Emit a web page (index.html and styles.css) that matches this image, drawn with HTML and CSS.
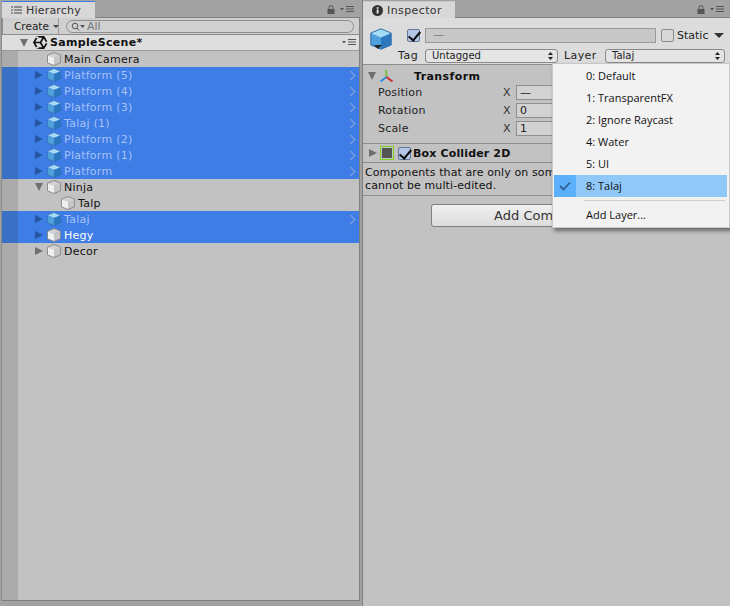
FILE: index.html
```html
<!DOCTYPE html>
<html lang="en">
<head>
    <meta charset="UTF-8">
    <title>Hierarchy and Inspector</title>
    <link rel="stylesheet" href="styles.css">
</head>
<body>
    <svg class="defs" width="0" height="0">
        <symbol id="cube-blue" viewBox="0 0 14 14">
            <path d="M7 .5 13.5 3.2 7 6 .5 3.2Z" fill="#a5dcf5"/>
            <path d="M.5 3.2 7 6V13.5L.5 10.8Z" fill="#4f9fdc"/>
            <path d="M13.5 3.2 7 6V13.5L13.5 10.8Z" fill="#2b78bd"/>
            <path d="M.5 3.2 7 .5 13.5 3.2V10.8L7 13.5.5 10.8Z" fill="none" stroke="#2d6aa6" stroke-width=".6"/>
        </symbol>
        <symbol id="cube-grey" viewBox="0 0 14 14">
            <path d="M7 .5 13.5 3.2 7 6 .5 3.2Z" fill="#d2d2d2"/>
            <path d="M.5 3.2 7 6V13.5L.5 10.8Z" fill="#f0f0f0"/>
            <path d="M13.5 3.2 7 6V13.5L13.5 10.8Z" fill="#c6c6c6"/>
            <path d="M.5 3.2 7 .5 13.5 3.2V10.8L7 13.5.5 10.8Z" fill="none" stroke="#858585" stroke-width=".9"/>
        </symbol>
        <symbol id="lock" viewBox="0 0 8 9">
            <path d="M2 4V2.5a2 2 0 0 1 4 0V4" fill="none" stroke="#555" stroke-width="1"/>
            <rect x="0.5" y="4" width="7" height="5" fill="#555"/>
        </symbol>
        <symbol id="menu" viewBox="0 0 14 7">
            <path d="M0 2h4L2 4.5Z" fill="#555"/>
            <path d="M6 .5h8M6 3h8M6 5.5h8" stroke="#555" stroke-width="1"/>
        </symbol>
        <symbol id="updown" viewBox="0 0 5 8">
            <path d="M2.500 0 5 3H0ZM0 5H5L2.500 8Z" fill="#222"/>
        </symbol>
    </svg>

    <div class="window">
        <section class="panel hierarchy">
            <div class="tabbar">
                <div class="tab tab-active">
                    <svg class="tab-icon" width="11" height="8" viewBox="0 0 11 8"><path d="M0 1h2M0 4h2M0 7h2M3 1h8M3 4h8M3 7h8" stroke="#444" stroke-width="1"/></svg>
                    Hierarchy
                </div>
                <div class="tab-tools">
                    <svg width="8" height="9"><use href="#lock"/></svg>
                    <svg width="14" height="7"><use href="#menu"/></svg>
                </div>
            </div>
            <div class="panel-body">
                <div class="toolbar">
                    <div class="create">Create <span class="create-caret"></span></div>
                    <div class="search">
                        <svg width="15" height="9" viewBox="0 0 15 9"><circle cx="4" cy="4" r="2.8" fill="none" stroke="#555"/><path d="M6 6l2 2.5" stroke="#555"/><path d="M9 3h5L11.500 6Z" fill="#555"/></svg>
                        <span>All</span>
                    </div>
                </div>
                <div class="scene-row">
                    <span class="arrow arrow-down"></span>
                    <svg class="unity" width="15" height="15" viewBox="0 0 16 16">
                        <path d="M1 8 4.500 2H11.500L15 8 11.500 14H4.500ZM8 8H1M8 8 11.500 2M8 8 11.500 14" fill="none" stroke="#111" stroke-width="1.800"/>
                        <path d="M3.200 1.500H6V3.200H3.200ZM3.200 12.800H6V14.500H3.200ZM14 7H16V9H14Z" fill="#dedede"/>
                    </svg>
                    <span class="scene-name">SampleScene*</span>
                    <svg class="scene-menu" width="14" height="7"><use href="#menu"/></svg>
                </div>
                <div class="tree">
                    <div class="row"><span class="gutter"></span><span class="arrow-slot"></span><svg class="cube" width="14" height="14"><use href="#cube-grey"/></svg><span>Main Camera</span></div>
                    <div class="row selected prefab"><span class="gutter"></span><span class="arrow-slot"><span class="arrow arrow-right"></span></span><svg class="cube" width="14" height="14"><use href="#cube-blue"/></svg><span>Platform (5)</span><span class="chevron"></span></div>
                    <div class="row selected prefab"><span class="gutter"></span><span class="arrow-slot"><span class="arrow arrow-right"></span></span><svg class="cube" width="14" height="14"><use href="#cube-blue"/></svg><span>Platform (4)</span><span class="chevron"></span></div>
                    <div class="row selected prefab"><span class="gutter"></span><span class="arrow-slot"><span class="arrow arrow-right"></span></span><svg class="cube" width="14" height="14"><use href="#cube-blue"/></svg><span>Platform (3)</span><span class="chevron"></span></div>
                    <div class="row selected prefab"><span class="gutter"></span><span class="arrow-slot"><span class="arrow arrow-right"></span></span><svg class="cube" width="14" height="14"><use href="#cube-blue"/></svg><span>Talaj (1)</span><span class="chevron"></span></div>
                    <div class="row selected prefab"><span class="gutter"></span><span class="arrow-slot"><span class="arrow arrow-right"></span></span><svg class="cube" width="14" height="14"><use href="#cube-blue"/></svg><span>Platform (2)</span><span class="chevron"></span></div>
                    <div class="row selected prefab"><span class="gutter"></span><span class="arrow-slot"><span class="arrow arrow-right"></span></span><svg class="cube" width="14" height="14"><use href="#cube-blue"/></svg><span>Platform (1)</span><span class="chevron"></span></div>
                    <div class="row selected prefab"><span class="gutter"></span><span class="arrow-slot"><span class="arrow arrow-right"></span></span><svg class="cube" width="14" height="14"><use href="#cube-blue"/></svg><span>Platform</span><span class="chevron"></span></div>
                    <div class="row"><span class="gutter"></span><span class="arrow-slot"><span class="arrow arrow-down"></span></span><svg class="cube" width="14" height="14"><use href="#cube-grey"/></svg><span>Ninja</span></div>
                    <div class="row child"><span class="gutter"></span><span class="arrow-slot"></span><svg class="cube" width="14" height="14"><use href="#cube-grey"/></svg><span>Talp</span></div>
                    <div class="row selected prefab"><span class="gutter"></span><span class="arrow-slot"><span class="arrow arrow-right"></span></span><svg class="cube" width="14" height="14"><use href="#cube-blue"/></svg><span>Talaj</span><span class="chevron"></span></div>
                    <div class="row selected"><span class="gutter"></span><span class="arrow-slot"><span class="arrow arrow-right"></span></span><svg class="cube" width="14" height="14"><use href="#cube-grey"/></svg><span>Hegy</span></div>
                    <div class="row"><span class="gutter"></span><span class="arrow-slot"><span class="arrow arrow-right"></span></span><svg class="cube" width="14" height="14"><use href="#cube-grey"/></svg><span>Decor</span></div>
                    <div class="tree-rest"><span class="gutter"></span></div>
                </div>
            </div>
        </section>

        <section class="panel inspector">
            <div class="tabbar">
                <div class="tab tab-inspector">
                    <svg class="tab-icon" width="11" height="11" viewBox="0 0 11 11"><circle cx="5.500" cy="5.500" r="5.500" fill="#333"/><rect x="4.700" y="4.500" width="1.800" height="4" fill="#eee"/><rect x="4.700" y="2.200" width="1.800" height="1.500" fill="#eee"/></svg>
                    Inspector
                </div>
                <div class="tab-tools">
                    <svg width="8" height="9"><use href="#lock"/></svg>
                    <svg width="14" height="7"><use href="#menu"/></svg>
                </div>
            </div>
            <div class="inspector-body">
                <div class="go-header">
                    <div class="go-icon">
                        <svg width="22" height="22"><use href="#cube-blue"/></svg>
                        <span class="go-caret"></span>
                    </div>
                    <div class="go-fields">
                        <div class="go-line">
                            <span class="check check-on"></span>
                            <div class="name-field">—</div>
                            <span class="check static-check"></span>
                            <span class="static-label">Static</span>
                            <span class="static-caret"></span>
                        </div>
                        <div class="go-line tag-line">
                            <span class="tag-label">Tag</span>
                            <div class="dropdown tag-drop">Untagged<svg width="5" height="8"><use href="#updown"/></svg></div>
                            <span class="layer-label">Layer</span>
                            <div class="dropdown layer-drop">Talaj<svg width="5" height="8"><use href="#updown"/></svg></div>
                        </div>
                    </div>
                </div>

                <div class="comp-title transform-title">
                    <span class="arrow arrow-down"></span>
                    <svg class="gizmo" width="15" height="15" viewBox="0 0 15 15"><path d="M7.500 8 7 1" stroke="#7bc043" stroke-width="2"/><path d="M7.500 8 1.500 12.500" stroke="#2f8fe0" stroke-width="2"/><path d="M7.500 8 13.500 12.500" stroke="#c8322c" stroke-width="2"/></svg>
                    <strong>Transform</strong>
                </div>
                <div class="prop"><span class="prop-name">Position</span><span class="axis">X</span><div class="num">—</div></div>
                <div class="prop"><span class="prop-name">Rotation</span><span class="axis">X</span><div class="num">0</div></div>
                <div class="prop"><span class="prop-name">Scale</span><span class="axis">X</span><div class="num">1</div></div>

                <div class="comp-title collider-title">
                    <span class="arrow arrow-right"></span>
                    <span class="collider-icon"></span>
                    <span class="check check-on small"></span>
                    <strong>Box Collider 2D</strong>
                </div>
                <div class="message">Components that are only on some of the selected objects<br>cannot be multi-edited.</div>
                <div class="add-wrap"><button class="add-btn">Add Component</button></div>
            </div>

            <div class="layer-menu">
                <div class="menu-item"><span class="menu-mark"></span>0: Default</div>
                <div class="menu-item"><span class="menu-mark"></span>1: TransparentFX</div>
                <div class="menu-item"><span class="menu-mark"></span>2: Ignore Raycast</div>
                <div class="menu-item"><span class="menu-mark"></span>4: Water</div>
                <div class="menu-item"><span class="menu-mark"></span>5: UI</div>
                <div class="menu-item menu-on">
                    <span class="menu-mark"><svg width="12" height="10" viewBox="0 0 12 10"><path d="M1 5l3.500 3.500L11 1.500" fill="none" stroke="#2f5f8f" stroke-width="1.800"/></svg></span>8: Talaj
                </div>
                <div class="menu-sep"></div>
                <div class="menu-item"><span class="menu-mark"></span>Add Layer...</div>
            </div>
        </section>
    </div>
</body>
</html>
```

FILE: styles.css
```css
* {
    box-sizing: border-box;
}
body {
    margin: 0;
    font-family: "DejaVu Sans", sans-serif;
    font-size: 11px;
    color: #111;
    background: #a2a2a2;
    overflow: hidden;
}
.defs {
    display: block;
    height: 0;
}
.window {
    display: flex;
    width: 730px;
    height: 606px;
}
.panel {
    display: flex;
    flex-direction: column;
    position: relative;
}
.hierarchy {
    width: 362px;
    padding: 0 2px 5px;
}
.inspector {
    width: 368px;
    border-left: 1px solid #7e7e7e;
}

/* tabs */
.tabbar {
    display: flex;
    justify-content: space-between;
    height: 18px;
    flex: none;
    padding-top: 1px;
    border-bottom: 1px solid #7e7e7e;
}
.tab {
    display: flex;
    align-items: center;
    gap: 4px;
    height: 17px;
    color: #333;
    letter-spacing: .2px;
    font-size: 11px;
}
.tab-active {
    width: 93px;
    padding-left: 9px;
    background: #d8d8d8;
    border-top: 1px solid #3e7ce6;
}
.tab-inspector {
    width: 92px;
    padding-left: 9px;
    background: #d8d8d8;
    border-top: 1px solid #c8c8c8;
    letter-spacing: .4px;
}
.tab-tools {
    display: flex;
    align-items: center;
    gap: 5px;
    height: 16px;
    padding-right: 6px;
}

/* hierarchy */
.panel-body {
    flex: 1;
    display: flex;
    flex-direction: column;
    width: 358px;
    border-right: 1px solid #7e7e7e;
    border-bottom: 1px solid #7e7e7e;
    box-shadow: inset -1px 0 #dadada, inset 0 -1px #dadada, -1px 0 #8a8a8a;
}
.toolbar {
    display: flex;
    align-items: center;
    height: 17px;
    flex: none;
    background: #cfcfcf;
    border-bottom: 1px solid #8c8c8c;
    border-left: 1px solid #8c8c8c;
}
.create {
    display: flex;
    align-items: center;
    gap: 4px;
    width: 56px;
    height: 16px;
    padding-left: 11px;
    font-size: 10.500px;
    color: #222;
    border-right: 1px solid #9a9a9a;
}
.create-caret {
    border: 3px solid transparent;
    border-top-color: #444;
    border-bottom-width: 0;
}
.search {
    display: flex;
    align-items: center;
    gap: 1px;
    width: 288px;
    height: 13px;
    margin-left: 7px;
    padding-left: 4px;
    border: 1px solid #8e8e8e;
    border-radius: 7px;
    background: #d0d0d0;
    color: #777;
    font-size: 11px;
}
.scene-row {
    display: flex;
    align-items: center;
    height: 16px;
    flex: none;
    padding-left: 18px;
    background: #dedede;
    border-bottom: 1px solid #9a9a9a;
}
.scene-row .arrow {
    margin-right: 5px;
}
.unity {
    margin-right: 2px;
}
.scene-name {
    font-weight: bold;
    letter-spacing: .3px;
}
.scene-menu {
    margin-left: auto;
    margin-right: 3px;
}
.tree {
    flex: 1;
    display: flex;
    flex-direction: column;
    background: #c2c2c2;
    letter-spacing: .25px;
}
.row {
    display: flex;
    align-items: center;
    height: 16px;
    flex: none;
}
.gutter {
    width: 16px;
    height: 100%;
    flex: none;
    background: #ababab;
}
.arrow-slot {
    display: flex;
    align-items: center;
    width: 29px;
    flex: none;
    padding-left: 17px;
}
.cube {
    margin-right: 3px;
    flex: none;
}
.child .arrow-slot {
    width: 43px;
}
.selected {
    background: #3e7ce6;
    color: #fff;
}
.selected .gutter {
    background: #3a70c4;
}
.selected .arrow {
    color: #27579f;
}
.prefab {
    color: #a6c3f4;
}
.chevron {
    width: 7px;
    height: 7px;
    margin-left: auto;
    margin-right: 5px;
    border-top: 1.500px solid #8aa6d8;
    border-right: 1.500px solid #8aa6d8;
    transform: rotate(45deg);
}
.tree-rest {
    flex: 1;
    display: flex;
}
.arrow {
    display: block;
    flex: none;
    color: #6f6f6f;
}
.arrow-right {
    width: 0;
    height: 0;
    border-left: 8px solid currentColor;
    border-top: 4.500px solid transparent;
    border-bottom: 4.500px solid transparent;
}
.arrow-down {
    width: 0;
    height: 0;
    border-top: 8px solid currentColor;
    border-left: 4.500px solid transparent;
    border-right: 4.500px solid transparent;
}

/* inspector */
.inspector-body {
    flex: 1;
    background: #c2c2c2;
}
.go-header {
    display: flex;
    height: 47px;
    padding: 10px 0 0 7px;
    background: #dcdcdc;
    border-bottom: 1px solid #8c8c8c;
}
.go-icon {
    position: relative;
    width: 24px;
    height: 24px;
    flex: none;
}
.go-caret {
    position: absolute;
    left: 4px;
    top: 17px;
    border: 4px solid transparent;
    border-top-color: #222;
    border-bottom-width: 0;
}
.go-fields {
    margin-left: 1px;
    flex: 1;
}
.go-line {
    display: flex;
    align-items: center;
    height: 15px;
}
.check {
    display: block;
    width: 13px;
    height: 13px;
    flex: none;
    border: 1px solid #8a8a8a;
    border-radius: 2px;
    background: #d8d8d8;
    position: relative;
}
.check-on {
    margin-left: 12px;
    background: #b4c6e6;
    border-color: #66789a;
}
.check-on::after {
    content: "";
    position: absolute;
    left: 3px;
    top: -1px;
    width: 5px;
    height: 10px;
    border: solid #0a0a0a;
    border-width: 0 2.200px 2.200px 0;
    transform: rotate(40deg);
}
.name-field {
    width: 231px;
    height: 15px;
    margin-left: 5px;
    padding-left: 7px;
    border: 1px solid #9a9a9a;
    background: #c8c8c8;
    color: #777;
    line-height: 12px;
}
.static-check {
    margin-left: 5px;
}
.static-label {
    margin-left: 3px;
    color: #222;
}
.static-caret {
    margin-left: 6px;
    border: 5px solid transparent;
    border-top-color: #333;
    border-bottom-width: 0;
}
.tag-line {
    margin-top: 5px;
}
.tag-label {
    width: 27px;
    margin-left: 3px;
    color: #222;
    letter-spacing: .5px;
}
.layer-label {
    width: 41px;
    margin-left: 6px;
    color: #222;
    letter-spacing: .4px;
}
.dropdown {
    display: flex;
    align-items: center;
    justify-content: space-between;
    height: 14px;
    padding: 0 4px 0 6px;
    border: 1px solid #8a8a8a;
    border-radius: 3px;
    background: #e4e4e4;
    font-size: 10px;
    color: #222;
}
.tag-drop {
    width: 133px;
}
.layer-drop {
    width: 120px;
}
.comp-title {
    display: flex;
    align-items: center;
}
.comp-title strong {
    letter-spacing: .4px;
}
.transform-title {
    height: 18px;
    padding: 4px 0 0 5px;
}
.gizmo {
    margin-left: 3px;
    margin-right: 20px;
}
.prop {
    display: flex;
    align-items: center;
    height: 18px;
    padding-left: 15px;
    color: #222;
    letter-spacing: .2px;
}
.prop-name {
    width: 125px;
}
.axis {
    width: 13px;
    color: #333;
}
.num {
    width: 60px;
    height: 15px;
    padding-left: 3px;
    border: 1px solid #8f8f8f;
    background: #d2d2d2;
    line-height: 13px;
}
.collider-title {
    height: 20px;
    margin-top: 6px;
    padding-left: 6px;
    border-top: 1px solid #8c8c8c;
    border-bottom: 1px solid #8c8c8c;
}
.collider-title strong {
    letter-spacing: .15px;
}
.collider-icon {
    width: 14px;
    height: 14px;
    margin-left: 3px;
    flex: none;
    padding: 1px;
    background: #555 content-box;
    border: 1px solid #7ed321;
}
.check.small {
    margin-left: 4px;
    margin-right: 2px;
}
.message {
    width: 189px;
    height: 32px;
    padding: 3px 0 0 2px;
    color: #111;
    letter-spacing: .1px;
    line-height: 13px;
    white-space: nowrap;
    overflow: hidden;
}
.add-wrap {
    display: flex;
    justify-content: center;
    padding-top: 8px;
    border-top: 1px solid #8c8c8c;
}
.add-btn {
    width: 231px;
    height: 23px;
    border: 1px solid #7e7e7e;
    border-radius: 3px;
    background: linear-gradient(#f0f0f0, #dcdcdc);
    font-family: "DejaVu Sans", sans-serif;
    font-size: 13px;
    color: #333;
}

/* layer popup */
.layer-menu {
    position: absolute;
    left: 189px;
    top: 63px;
    width: 178px;
    height: 165px;
    padding: 1px 2px 0 1px;
    background: #f2f2f2;
    border: 1px solid #c8c8c8;
    box-shadow: 2px 3px 4px rgba(0,0,0,0.45);
    font-family: "Open Sans", sans-serif;
    font-size: 11px;
    color: #111;
}
.menu-item {
    display: flex;
    align-items: center;
    height: 22px;
    padding-bottom: 2px;
}
.menu-on {
    padding-bottom: 0;
    line-height: 20px;
}
.menu-mark {
    display: flex;
    align-items: center;
    justify-content: center;
    width: 22px;
    height: 22px;
    margin-right: 10px;
    flex: none;
}
.menu-on {
    background: #90c8f8;
}
.menu-on .menu-mark {
    background: #5ab0fb;
}
.menu-sep {
    height: 1px;
    margin: 3px 2px 3px 30px;
    background: #cfcfcf;
}
```
